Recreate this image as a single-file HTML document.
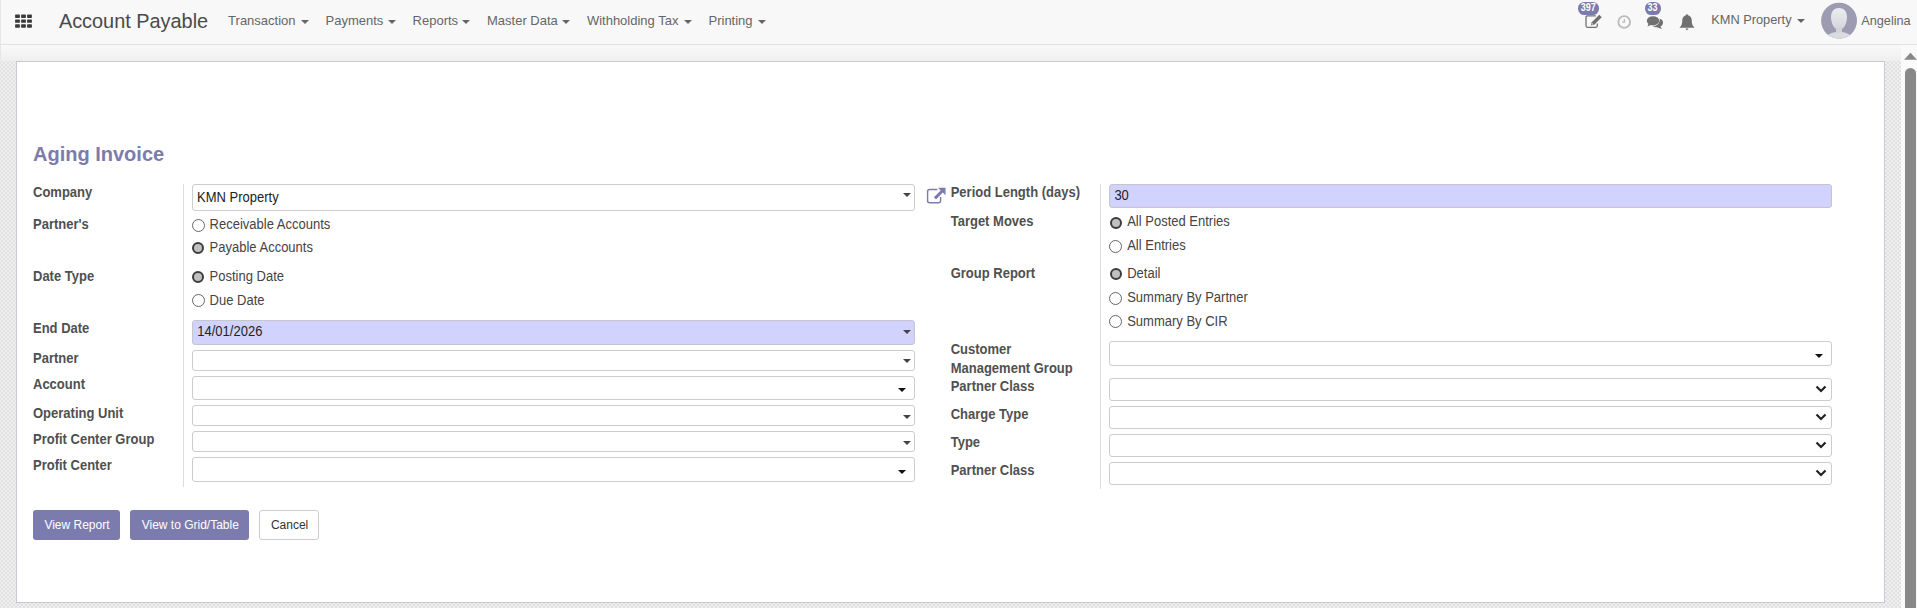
<!DOCTYPE html>
<html><head><meta charset="utf-8">
<style>
html,body{margin:0;padding:0;width:1917px;height:608px;overflow:hidden;background:#fff;}
body{position:relative;font-family:"Liberation Sans",sans-serif;}
.t{position:absolute;line-height:1;white-space:nowrap;}
.abs{position:absolute;}
.caret{position:absolute;width:0;height:0;}
.box{position:absolute;box-sizing:border-box;border:1px solid #ccc;}
.radio{position:absolute;width:13px;height:13px;box-sizing:border-box;border-radius:50%;border:1px solid #666;background:#fff;}
.radio.on{width:12px;height:12px;border:2px solid #3c3c3c;background:#c0c0c0;}
</style></head><body>
<div class="abs" style="left:0;top:0;width:1917px;height:44px;background:#f8f8f8;"></div>
<div class="abs" style="left:0;top:44px;width:1917px;height:1px;background:#e2e2e2;"></div>
<div class="abs" style="left:0;top:0;width:1px;height:61px;background:#e6e6e6;z-index:2"></div>
<div class="abs" style="left:0;top:45px;width:1901px;height:16px;background:linear-gradient(#f9f9f9,#efefef);"></div>
<div class="abs" style="left:0;top:61px;width:1901px;height:547px;background:repeating-conic-gradient(#e0e0e0 0 25%,#f0f0f0 0 50%) 1px 1px/4px 4px;"></div>
<div class="abs" style="left:1901px;top:45px;width:16px;height:563px;background:#fafafa;"></div>
<svg class="abs" style="left:1901px;top:45px" width="16" height="20" viewBox="0 0 16 20"><path d="M3 14.7 L9.5 7.8 L16 14.7 Z" fill="#888"/></svg>
<div class="abs" style="left:1905px;top:68px;width:11px;height:560px;background:#888;border-radius:5.5px;"></div>
<div class="abs" style="left:16px;top:61px;width:1869px;height:542px;box-sizing:border-box;border:1px solid #c8c8d6;background:#fff;"></div>
<svg class="abs" style="left:0;top:0" width="40" height="40"><rect x="15.1" y="14.5" width="4.8" height="3.4" rx="0.6" fill="#3a3a3a"/><rect x="15.1" y="19.4" width="4.8" height="3.4" rx="0.6" fill="#3a3a3a"/><rect x="15.1" y="24.3" width="4.8" height="3.4" rx="0.6" fill="#3a3a3a"/><rect x="21.1" y="14.5" width="4.8" height="3.4" rx="0.6" fill="#3a3a3a"/><rect x="21.1" y="19.4" width="4.8" height="3.4" rx="0.6" fill="#3a3a3a"/><rect x="21.1" y="24.3" width="4.8" height="3.4" rx="0.6" fill="#3a3a3a"/><rect x="27.1" y="14.5" width="4.8" height="3.4" rx="0.6" fill="#3a3a3a"/><rect x="27.1" y="19.4" width="4.8" height="3.4" rx="0.6" fill="#3a3a3a"/><rect x="27.1" y="24.3" width="4.8" height="3.4" rx="0.6" fill="#3a3a3a"/></svg>
<div class="t" style="left:58.9px;top:12.05px;font-size:19.9px;color:#4a4a4a;">Account Payable</div>
<div class="t" style="left:228.1px;top:14.10px;font-size:13px;color:#666;">Transaction</div>
<svg class="abs" style="left:299.90px;top:18.70px" width="10" height="6"><path d="M1 1 H9 L5.0 5 Z" fill="#666"/></svg>
<div class="t" style="left:325.5px;top:14.10px;font-size:13px;color:#666;">Payments</div>
<svg class="abs" style="left:387.00px;top:18.70px" width="10" height="6"><path d="M1 1 H9 L5.0 5 Z" fill="#666"/></svg>
<div class="t" style="left:412.6px;top:14.10px;font-size:13px;color:#666;">Reports</div>
<svg class="abs" style="left:460.90px;top:18.70px" width="10" height="6"><path d="M1 1 H9 L5.0 5 Z" fill="#666"/></svg>
<div class="t" style="left:487px;top:14.10px;font-size:13px;color:#666;">Master Data</div>
<svg class="abs" style="left:561.40px;top:18.70px" width="10" height="6"><path d="M1 1 H9 L5.0 5 Z" fill="#666"/></svg>
<div class="t" style="left:586.9px;top:14.10px;font-size:13px;color:#666;">Withholding Tax</div>
<svg class="abs" style="left:683.00px;top:18.70px" width="10" height="6"><path d="M1 1 H9 L5.0 5 Z" fill="#666"/></svg>
<div class="t" style="left:708.5px;top:14.10px;font-size:13px;color:#666;">Printing</div>
<svg class="abs" style="left:757.00px;top:18.70px" width="10" height="6"><path d="M1 1 H9 L5.0 5 Z" fill="#666"/></svg>
<div class="t" style="left:1711.2px;top:14.16px;font-size:12.8px;color:#666;">KMN Property</div>
<svg class="abs" style="left:1795.90px;top:18.30px" width="10" height="6"><path d="M1 1 H9 L5.0 5 Z" fill="#666"/></svg>
<div class="t" style="left:1861.3px;top:14.95px;font-size:12.7px;color:#666;">Angelina</div>
<svg class="abs" style="left:1820px;top:2px" width="38" height="38" viewBox="0 0 38 38">
<defs><clipPath id="ac"><circle cx="19.05" cy="18.7" r="17.95"/></clipPath>
<linearGradient id="hg" x1="0" y1="0" x2="0" y2="1"><stop offset="0" stop-color="#ececf0"/><stop offset="1" stop-color="#d4d5dc"/></linearGradient></defs>
<circle cx="19.05" cy="18.7" r="17.95" fill="#9b9bb2"/>
<g clip-path="url(#ac)">
<ellipse cx="19" cy="40" rx="15" ry="10.2" fill="#dadbe0"/>
<path d="M19 5.9 C24.5 5.9 27 10 27 15 C27 21 24 27.9 19 27.9 C14 27.9 11 21 11 15 C11 10 13.5 5.9 19 5.9 Z" fill="url(#hg)"/>
<rect x="16" y="26" width="6" height="4.5" fill="#d2d3da"/>
</g></svg>
<div class="abs" style="left:1578px;top:2px;width:21px;height:12.6px;border-radius:6.3px;background:#7c7bad;color:#fff;font-size:10px;font-weight:bold;line-height:11.4px;text-align:center;"><span style="display:inline-block;transform:scaleX(0.9)">397</span></div>
<div class="abs" style="left:1645px;top:2px;width:16px;height:12.6px;border-radius:6.3px;background:#7c7bad;color:#fff;font-size:10px;font-weight:bold;line-height:11.4px;text-align:center;"><span style="display:inline-block;transform:scaleX(0.9)">33</span></div>
<svg class="abs" style="left:1584px;top:14px" width="19" height="16" viewBox="0 0 19 16">
<path d="M11.8 1.9 H3.5 Q2 1.9 2 3.4 V11.8 Q2 13.3 3.5 13.3 H11.8 Q13.3 13.3 13.3 11.8 V9.4" fill="none" stroke="#707070" stroke-width="1.3"/>
<path d="M7 11.6 L7.73 8.33 L15.23 0.83 L17.77 3.37 L10.27 10.87 Z" fill="#707070"/>
<path d="M7.9 10.7 L8.35 9.1 L9.5 10.25 Z" fill="#f0f0f0"/>
</svg>
<svg class="abs" style="left:1616px;top:14px" width="17" height="17" viewBox="0 0 17 17">
<circle cx="8.2" cy="8.0" r="5.85" fill="none" stroke="#bbb" stroke-width="1.9"/>
<path d="M8.4 5.0 V8.1 H6.0" fill="none" stroke="#bbb" stroke-width="1.3"/>
</svg>
<svg class="abs" style="left:1646px;top:15px" width="18" height="15" viewBox="0 0 18 15">
<ellipse cx="7" cy="5.8" rx="6.2" ry="4.6" fill="#707070"/>
<path d="M2.5 8.5 L1.5 11.5 L6 9.5 Z" fill="#707070"/>
<path d="M13.8 3.4 Q17.5 5 17 8.6 Q16.6 10.6 14.5 11.6 L16 14 L11 12.2 Q8.5 12.4 7 11.2 Q12.8 10.6 13.8 5.2 Z" fill="#707070"/>
</svg>
<svg class="abs" style="left:1679px;top:13px" width="16" height="18" viewBox="0 0 16 18">
<path d="M8 1.2 Q9 1.2 9.1 2.3 Q12.8 3.2 12.8 8 Q12.8 12.4 15.3 14.2 V14.8 H0.7 V14.2 Q3.2 12.4 3.2 8 Q3.2 3.2 6.9 2.3 Q7 1.2 8 1.2 Z" fill="#707070"/>
<path d="M6.6 15.4 Q6.8 17 8 17 Q9.2 17 9.4 15.4 Z" fill="#707070"/>
</svg>
<div class="t" style="left:33px;top:144.27px;font-size:20px;color:#7c7bad;font-weight:bold;">Aging Invoice</div>
<div class="t" style="left:33px;top:186.10px;font-size:13px;color:#505050;font-weight:bold;transform:scaleY(1.075);transform-origin:0 11.00px;">Company</div>
<div class="t" style="left:33px;top:218.20px;font-size:13px;color:#505050;font-weight:bold;transform:scaleY(1.075);transform-origin:0 11.00px;">Partner's</div>
<div class="t" style="left:33px;top:270.30px;font-size:13px;color:#505050;font-weight:bold;transform:scaleY(1.075);transform-origin:0 11.00px;">Date Type</div>
<div class="t" style="left:33px;top:321.60px;font-size:13px;color:#505050;font-weight:bold;transform:scaleY(1.075);transform-origin:0 11.00px;">End Date</div>
<div class="t" style="left:33px;top:352.00px;font-size:13px;color:#505050;font-weight:bold;transform:scaleY(1.075);transform-origin:0 11.00px;">Partner</div>
<div class="t" style="left:33px;top:378.00px;font-size:13px;color:#505050;font-weight:bold;transform:scaleY(1.075);transform-origin:0 11.00px;">Account</div>
<div class="t" style="left:33px;top:406.80px;font-size:13px;color:#505050;font-weight:bold;transform:scaleY(1.075);transform-origin:0 11.00px;">Operating Unit</div>
<div class="t" style="left:33px;top:433.00px;font-size:13px;color:#505050;font-weight:bold;transform:scaleY(1.075);transform-origin:0 11.00px;">Profit Center Group</div>
<div class="t" style="left:33px;top:459.10px;font-size:13px;color:#505050;font-weight:bold;transform:scaleY(1.075);transform-origin:0 11.00px;">Profit Center</div>
<div class="abs" style="left:183px;top:184px;width:1px;height:303px;background:#ddd;"></div>
<div class="abs" style="left:1100px;top:184px;width:1px;height:305px;background:#ddd;"></div>
<div class="box" style="left:192px;top:184px;width:723px;height:27px;background:#fff;border-color:#ccc;border-radius:3px"></div>
<div class="t" style="left:197px;top:191.20px;font-size:13px;color:#222;transform:scaleY(1.075);transform-origin:0 11.00px;">KMN Property</div>
<svg class="abs" style="left:902.00px;top:192.00px" width="10" height="6"><path d="M1 1 H9 L5.0 5 Z" fill="#444"/></svg>
<div class="radio" style="left:192.10px;top:218.80px"></div>
<div class="t" style="left:209.6px;top:218.10px;font-size:13px;color:#444;transform:scaleY(1.075);transform-origin:0 11.00px;">Receivable Accounts</div>
<div class="radio on" style="left:192.30px;top:242.30px"></div>
<div class="t" style="left:209.6px;top:241.10px;font-size:13px;color:#444;transform:scaleY(1.075);transform-origin:0 11.00px;">Payable Accounts</div>
<div class="radio on" style="left:192.30px;top:271.20px"></div>
<div class="t" style="left:209.6px;top:269.90px;font-size:13px;color:#444;transform:scaleY(1.075);transform-origin:0 11.00px;">Posting Date</div>
<div class="radio" style="left:192.10px;top:294.20px"></div>
<div class="t" style="left:209.6px;top:294.00px;font-size:13px;color:#444;transform:scaleY(1.075);transform-origin:0 11.00px;">Due Date</div>
<div class="box" style="left:192px;top:320px;width:723px;height:25px;background:#d2d2ff;border-color:#c5c5cf;border-radius:3px"></div>
<div class="t" style="left:197.3px;top:325.00px;font-size:13px;color:#222;transform:scaleY(1.075);transform-origin:0 11.00px;">14/01/2026</div>
<svg class="abs" style="left:902.00px;top:329.00px" width="10" height="6"><path d="M1 1 H9 L5.0 5 Z" fill="#444"/></svg>
<div class="box" style="left:192px;top:350px;width:723px;height:21px;background:#fff;border-color:#ccc;border-radius:3px"></div>
<svg class="abs" style="left:902.00px;top:358.00px" width="10" height="6"><path d="M1 1 H9 L5.0 5 Z" fill="#444"/></svg>
<div class="box" style="left:192px;top:376px;width:723px;height:24px;background:#fff;border-color:#ccc;border-radius:3px"></div>
<svg class="abs" style="left:897.00px;top:387.00px" width="10" height="6"><path d="M1 1 H9 L5.0 5 Z" fill="#111"/></svg>
<div class="box" style="left:192px;top:405px;width:723px;height:21px;background:#fff;border-color:#ccc;border-radius:3px"></div>
<svg class="abs" style="left:902.00px;top:414.00px" width="10" height="6"><path d="M1 1 H9 L5.0 5 Z" fill="#444"/></svg>
<div class="box" style="left:192px;top:431px;width:723px;height:21px;background:#fff;border-color:#ccc;border-radius:3px"></div>
<svg class="abs" style="left:902.00px;top:440.00px" width="10" height="6"><path d="M1 1 H9 L5.0 5 Z" fill="#444"/></svg>
<div class="box" style="left:192px;top:457px;width:723px;height:25px;background:#fff;border-color:#ccc;border-radius:3px"></div>
<svg class="abs" style="left:897.00px;top:469.00px" width="10" height="6"><path d="M1 1 H9 L5.0 5 Z" fill="#111"/></svg>
<svg class="abs" style="left:925px;top:186px" width="22" height="20" viewBox="0 0 22 20">
<path d="M12.4 3.5 H4.6 Q2.6 3.5 2.6 5.5 V14.7 Q2.6 16.7 4.6 16.7 H13.6 Q15.6 16.7 15.6 14.7 V11" fill="none" stroke="#7c7bad" stroke-width="1.45"/>
<path d="M13 1.8 H20.5 V9.3 L17.8 6.6 L11 13.4 L8.9 11.3 L15.7 4.5 Z" fill="#7c7bad"/>
</svg>
<div class="t" style="left:950.7px;top:186.10px;font-size:13px;color:#505050;font-weight:bold;transform:scaleY(1.075);transform-origin:0 11.00px;">Period Length (days)</div>
<div class="t" style="left:950.7px;top:214.90px;font-size:13px;color:#505050;font-weight:bold;transform:scaleY(1.075);transform-origin:0 11.00px;">Target Moves</div>
<div class="t" style="left:950.7px;top:267.20px;font-size:13px;color:#505050;font-weight:bold;transform:scaleY(1.075);transform-origin:0 11.00px;">Group Report</div>
<div class="t" style="left:950.7px;top:343.10px;font-size:13px;color:#505050;font-weight:bold;transform:scaleY(1.075);transform-origin:0 11.00px;">Customer</div>
<div class="t" style="left:950.7px;top:362.30px;font-size:13px;color:#505050;font-weight:bold;transform:scaleY(1.075);transform-origin:0 11.00px;">Management Group</div>
<div class="t" style="left:950.7px;top:379.60px;font-size:13px;color:#505050;font-weight:bold;transform:scaleY(1.075);transform-origin:0 11.00px;">Partner Class</div>
<div class="t" style="left:950.7px;top:408.20px;font-size:13px;color:#505050;font-weight:bold;transform:scaleY(1.075);transform-origin:0 11.00px;">Charge Type</div>
<div class="t" style="left:950.7px;top:436.20px;font-size:13px;color:#505050;font-weight:bold;transform:scaleY(1.075);transform-origin:0 11.00px;">Type</div>
<div class="t" style="left:950.7px;top:463.80px;font-size:13px;color:#505050;font-weight:bold;transform:scaleY(1.075);transform-origin:0 11.00px;">Partner Class</div>
<div class="box" style="left:1109px;top:184px;width:723px;height:24px;background:#d2d2ff;border-color:#c5c5cf;border-radius:3px"></div>
<div class="t" style="left:1114.4px;top:189.00px;font-size:13px;color:#222;transform:scaleY(1.075);transform-origin:0 11.00px;">30</div>
<div class="radio on" style="left:1109.60px;top:216.50px"></div>
<div class="t" style="left:1127.2px;top:215.00px;font-size:13px;color:#444;transform:scaleY(1.075);transform-origin:0 11.00px;">All Posted Entries</div>
<div class="radio" style="left:1108.70px;top:239.80px"></div>
<div class="t" style="left:1127.2px;top:239.10px;font-size:13px;color:#444;transform:scaleY(1.075);transform-origin:0 11.00px;">All Entries</div>
<div class="radio on" style="left:1109.60px;top:268.00px"></div>
<div class="t" style="left:1127.2px;top:267.00px;font-size:13px;color:#444;transform:scaleY(1.075);transform-origin:0 11.00px;">Detail</div>
<div class="radio" style="left:1108.70px;top:291.90px"></div>
<div class="t" style="left:1127.2px;top:290.60px;font-size:13px;color:#444;transform:scaleY(1.075);transform-origin:0 11.00px;">Summary By Partner</div>
<div class="radio" style="left:1108.70px;top:314.90px"></div>
<div class="t" style="left:1127.2px;top:314.50px;font-size:13px;color:#444;transform:scaleY(1.075);transform-origin:0 11.00px;">Summary By CIR</div>
<div class="box" style="left:1109px;top:341px;width:723px;height:25px;background:#fff;border-color:#ccc;border-radius:3px"></div>
<svg class="abs" style="left:1814.00px;top:353.00px" width="10" height="6"><path d="M1 1 H9 L5.0 5 Z" fill="#111"/></svg>
<div class="box" style="left:1109px;top:378px;width:723px;height:23px;background:#fff;border-color:#ccc;border-radius:3px"></div>
<svg class="abs" style="left:1815.3px;top:385.3px" width="12" height="8" viewBox="0 0 12 8"><path d="M1.5 1.5 L6 6 L10.5 1.5" fill="none" stroke="#222" stroke-width="2.2"/></svg>
<div class="box" style="left:1109px;top:406px;width:723px;height:23px;background:#fff;border-color:#ccc;border-radius:3px"></div>
<svg class="abs" style="left:1815.3px;top:413.3px" width="12" height="8" viewBox="0 0 12 8"><path d="M1.5 1.5 L6 6 L10.5 1.5" fill="none" stroke="#222" stroke-width="2.2"/></svg>
<div class="box" style="left:1109px;top:434px;width:723px;height:23px;background:#fff;border-color:#ccc;border-radius:3px"></div>
<svg class="abs" style="left:1815.3px;top:441.3px" width="12" height="8" viewBox="0 0 12 8"><path d="M1.5 1.5 L6 6 L10.5 1.5" fill="none" stroke="#222" stroke-width="2.2"/></svg>
<div class="box" style="left:1109px;top:462px;width:723px;height:23px;background:#fff;border-color:#ccc;border-radius:3px"></div>
<svg class="abs" style="left:1815.3px;top:469.3px" width="12" height="8" viewBox="0 0 12 8"><path d="M1.5 1.5 L6 6 L10.5 1.5" fill="none" stroke="#222" stroke-width="2.2"/></svg>
<div class="abs" style="left:33px;top:510px;width:87px;height:30px;border-radius:3px;background:#7c7bad;"></div>
<div class="t" style="left:44.4px;top:518.84px;font-size:12px;color:#fff;">View Report</div>
<div class="abs" style="left:130px;top:510px;width:119px;height:30px;border-radius:3px;background:#7c7bad;"></div>
<div class="t" style="left:141.7px;top:518.84px;font-size:12px;color:#fff;">View to Grid/Table</div>
<div class="abs" style="left:259px;top:510px;width:60px;height:30px;box-sizing:border-box;border:1px solid #ccc;border-radius:3px;background:#fff;"></div>
<div class="t" style="left:270.9px;top:518.84px;font-size:12px;color:#333;">Cancel</div>
</body></html>
